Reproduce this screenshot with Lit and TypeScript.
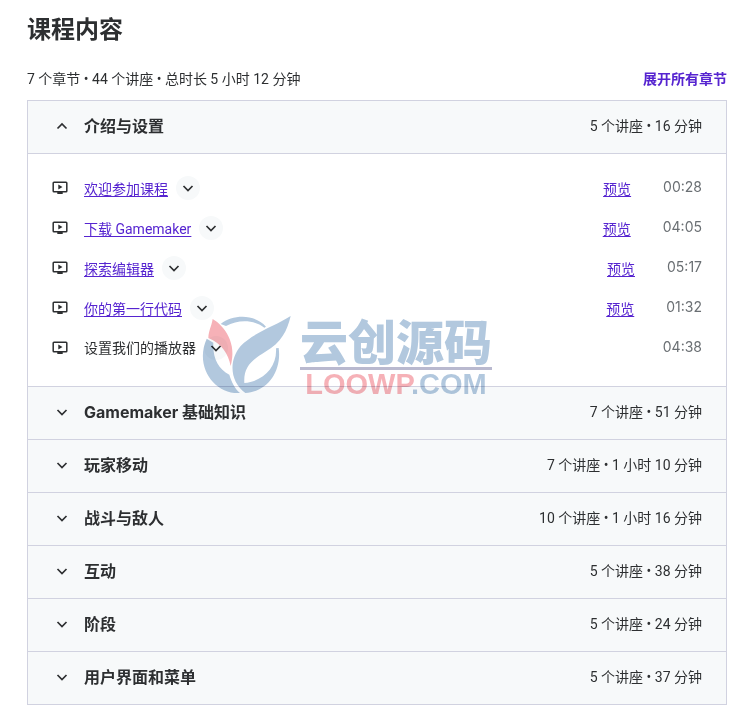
import { LitElement, html, css, svg, nothing } from "lit";
import { customElement, state } from "lit/decorators.js";

interface Lecture {
  title: string;
  time: string;
  preview: boolean;
}

interface Section {
  title: string;
  summary: string;
  lectures: Lecture[];
}

const SECTIONS: Section[] = [
  {
    title: "介绍与设置",
    summary: "5 个讲座 • 16 分钟",
    lectures: [
      { title: "欢迎参加课程", time: "00:28", preview: true },
      { title: "下载 Gamemaker", time: "04:05", preview: true },
      { title: "探索编辑器", time: "05:17", preview: true },
      { title: "你的第一行代码", time: "01:32", preview: true },
      { title: "设置我们的播放器", time: "04:38", preview: false },
    ],
  },
  { title: "Gamemaker 基础知识", summary: "7 个讲座 • 51 分钟", lectures: [] },
  { title: "玩家移动", summary: "7 个讲座 • 1 小时 10 分钟", lectures: [] },
  { title: "战斗与敌人", summary: "10 个讲座 • 1 小时 16 分钟", lectures: [] },
  { title: "互动", summary: "5 个讲座 • 38 分钟", lectures: [] },
  { title: "阶段", summary: "5 个讲座 • 24 分钟", lectures: [] },
  { title: "用户界面和菜单", summary: "5 个讲座 • 37 分钟", lectures: [] },
];

const chevron = (up: boolean) => html`
  <svg width="12" height="12" viewBox="0 0 12 12" aria-hidden="true">
    ${up
      ? svg`<path d="M1.5 8.5 6 4l4.500 4.500" fill="none" stroke="currentColor" stroke-width="1.700"/>`
      : svg`<path d="M1.500 4 6 8.500 10.500 4" fill="none" stroke="currentColor" stroke-width="1.700"/>`}
  </svg>
`;

const videoIcon = html`
  <svg width="16" height="16" viewBox="0 0 16 16" aria-hidden="true">
    <rect x="1.200" y="2.200" width="13.600" height="9.600" rx="0.800" fill="none" stroke="currentColor" stroke-width="1.500" />
    <path d="M6.300 4.500v5l4.200-2.500zM5.300 12h5.400v2h-5.400z" fill="currentColor" />
  </svg>
`;

@customElement("site-mark")
class SiteMark extends LitElement {
  static styles = css`
    :host {
      display: flex;
      align-items: center;
      gap: 5px;
      pointer-events: none;
    }
    .words {
      display: flex;
      flex-direction: column;
    }
    .name {
      font: 900 48px/56px "Noto Sans CJK SC", sans-serif;
      color: #b2c8de;
      border-bottom: 3px solid #b9b9cf;
    }
    .domain {
      font: bold 29px/29px "Liberation Sans", sans-serif;
      color: #b2c8de;
      text-align: center;
    }
    .red {
      color: #f6b1b7;
    }
  `;

  render() {
    return html`
      <svg width="95" height="86" viewBox="0 0 285 258" aria-hidden="true">
        <path fill="#f6b1b7" d="M38 21C74 42 112 95 92 162C85 125 65 95 25 78C26 55 34 45 38 21z" />
        <path fill="#b2c8de" d="M20 80L40 92C38 140 55 170 88 188C95 210 103 228 120 243C45 248 -18 165 20 80z" />
        <path fill="#b2c8de" d="M62 36C100 6 165 6 198 44L193 47C160 22 115 22 78 42z" />
        <path fill="#b2c8de" d="M272 12C225 42 160 62 122 102C85 145 90 210 136 243C200 240 246 180 236 108L228 109C232 165 190 208 133 213C130 165 155 145 195 120C245 92 262 55 272 12z" />
      </svg>
      <div class="words">
        <span class="name">云创源码</span>
        <span class="domain"><span class="red">LOOWP</span>.COM</span>
      </div>
    `;
  }
}

@customElement("app-root")
class AppRoot extends LitElement {
  static styles = css`
    :host {
      display: block;
      box-sizing: border-box;
      padding: 14px 23px 11px 27px;
      font: 14px/20px Roboto, "Noto Sans CJK SC", sans-serif;
      color: #2d2f31;
    }
    h1 {
      margin: 0;
      font-size: 24px;
      line-height: 32px;
      font-weight: 700;
    }
    button {
      font: inherit;
      color: inherit;
      background: none;
      border: 0;
      padding: 0;
      cursor: pointer;
    }
    .bar {
      display: flex;
      justify-content: space-between;
      align-items: center;
      margin: 22px 0 10px;
      height: 22px;
    }
    .bar .all {
      color: #5624d0;
      font-weight: 700;
    }
    .panel {
      position: relative;
      border: 1px solid #d1d2e0;
    }
    .section + .section {
      border-top: 1px solid #d1d2e0;
    }
    h2 {
      margin: 0;
      font: inherit;
    }
    .head {
      display: flex;
      align-items: center;
      width: 100%;
      gap: 12px;
      padding: 13px 24px 15px;
      background: #f7f9fa;
      text-align: left;
    }
    .arrow {
      display: flex;
      justify-content: center;
      width: 20px;
    }
    .name {
      flex: 1;
      font-family: Inter, "Noto Sans CJK SC", sans-serif;
      font-size: 16px;
      line-height: 24px;
      font-weight: 700;
    }
    .lectures {
      list-style: none;
      margin: 0;
      padding: 14px 24px 18px;
      border-top: 1px solid #d1d2e0;
    }
    .lecture {
      display: flex;
      align-items: center;
      height: 40px;
    }
    .lecture > svg {
      margin-right: 16px;
    }
    a {
      padding-top: 2px;
      color: #5624d0;
      text-underline-offset: 2px;
    }
    .more {
      display: flex;
      align-items: center;
      justify-content: center;
      width: 24px;
      height: 24px;
      margin-left: 8px;
      border-radius: 50%;
      background: #f7f9fa;
    }
    .preview {
      margin-left: auto;
    }
    .time {
      margin-left: 32px;
      padding-bottom: 2px;
      font-family: Inter, sans-serif;
      color: #6a6f73;
    }
    .lecture .more + .time {
      margin-left: auto;
    }
    site-mark {
      position: absolute;
      left: 172px;
      top: 210px;
      mix-blend-mode: multiply;
    }
  `;

  @state() private open = new Set<number>([0]);

  private toggle(i: number) {
    const next = new Set(this.open);
    if (!next.delete(i)) next.add(i);
    this.open = next;
  }

  private openAll() {
    this.open = new Set(SECTIONS.map((_, i) => i));
  }

  private lecture(l: Lecture) {
    return html`
      <li class="lecture">
        ${videoIcon}
        ${l.preview ? html`<a href="#">${l.title}</a>` : html`<span>${l.title}</span>`}
        <button class="more" aria-label=${l.title}>${chevron(false)}</button>
        ${l.preview ? html`<a class="preview" href="#">预览</a>` : nothing}
        <span class="time">${l.time}</span>
      </li>
    `;
  }

  render() {
    return html`
      <h1>课程内容</h1>
      <div class="bar">
        <span>7 个章节 • 44 个讲座 • 总时长 5 小时 12 分钟</span>
        <button class="all" @click=${this.openAll}>展开所有章节</button>
      </div>
      <div class="panel">
        ${SECTIONS.map((s, i) => {
          const open = this.open.has(i);
          return html`
            <section class="section">
              <h2>
                <button class="head" aria-expanded=${open} @click=${() => this.toggle(i)}>
                  <span class="arrow">${chevron(open)}</span>
                  <span class="name">${s.title}</span>
                  <span>${s.summary}</span>
                </button>
              </h2>
              ${open && s.lectures.length
                ? html`<ul class="lectures">${s.lectures.map((l) => this.lecture(l))}</ul>`
                : nothing}
            </section>
          `;
        })}
        <site-mark></site-mark>
      </div>
    `;
  }
}
